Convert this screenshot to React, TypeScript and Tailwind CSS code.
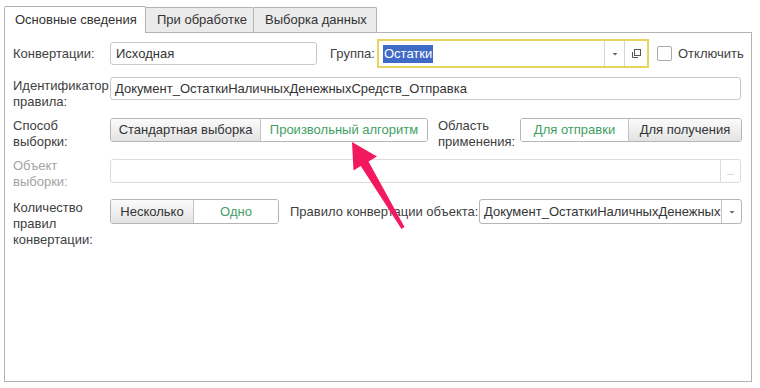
import React from "react";

const Seg = ({ children, active, className = "" }: { children: React.ReactNode; active?: boolean; className?: string }) => (
  <div
    className={
      "flex items-center justify-center h-full " +
      (active ? "bg-white text-[#3f9e63] " : "bg-gradient-to-b from-[#fbfbfb] to-[#e3e3e3] text-[#333] ") +
      className
    }
  >
    {children}
  </div>
);

const Arrow = () => (
  <svg width="10" height="10" viewBox="0 0 10 10" className="block">
    <path d="M2.5 4 L7.5 4 L5 6.5 Z" fill="#666" />
  </svg>
);

export default function App() {
  return (
    <div className="w-[760px] h-[388px] bg-white relative overflow-hidden font-['Liberation_Sans',Arial,sans-serif] text-[13px] text-[#404040]">
      {/* tabs */}
      <div className="flex items-end pl-[4px] pt-[6px] h-[33px]">
        <div className="relative z-10 h-[27px] w-[142px] border border-b-0 border-[#b3b3b3] bg-white flex items-center pl-[10px] text-[#333] rounded-tl-[2px] rounded-tr-[2px]">
          Основные сведения
        </div>
        <div className="h-[25px] mb-[1px] w-[108px] border border-l-0 border-b-0 border-[#b3b3b3] bg-[#ebebeb] flex items-center pl-[11px] text-[#333] rounded-tr-[2px]">
          При обработке
        </div>
        <div className="h-[25px] mb-[1px] w-[123px] border border-l-0 border-b-0 border-[#b3b3b3] bg-[#ebebeb] flex items-center pl-[11px] text-[#333] rounded-tr-[2px]">
          Выборка данных
        </div>
      </div>

      {/* panel */}
      <div className="-mt-px ml-[4px] w-[748px] h-[350px] border border-[#b3b3b3] bg-white pl-[8px] pt-[6px]">
        {/* row 1 */}
        <div className="flex items-center h-[29px]">
          <div className="w-[97px] leading-[16px]">Конвертации:</div>
          <div className="w-[207px] h-[23px] border border-[#c9c9c9] rounded-[3px] flex items-center pl-[5px] text-[#333]">
            Исходная
          </div>
          <div className="ml-[13px] w-[47px]">Группа:</div>
          <div className="w-[272px] h-[29px] border-2 border-[#e6d55e] bg-white flex items-stretch">
            <div className="flex-1 flex items-center pl-[4px]">
              <span className="bg-[#3f6ac6] text-white leading-[18px] px-[1px]">Остатки</span>
            </div>
            <div className="w-[20px] border-l border-[#d6d6d6] flex items-center justify-center">
              <Arrow />
            </div>
            <div className="w-[23px] border-l border-[#d6d6d6] flex items-center justify-center">
              <svg width="11" height="11" viewBox="0 0 11 11" className="block">
                <rect x="3.5" y="1.5" width="6" height="6" fill="none" stroke="#555" />
                <path d="M1.5 4 V9.5 H7" fill="none" stroke="#555" />
              </svg>
            </div>
          </div>
          <div className="ml-[8px] w-[15px] h-[15px] border border-[#a9a9a9] rounded-[2px] bg-white" />
          <div className="ml-[6px] text-[#404040]">Отключить</div>
        </div>

        {/* row 2 */}
        <div className="flex items-start mt-[9px]">
          <div className="w-[97px] leading-[16px] pt-[1px]">
            Идентификатор
            <br />
            правила:
          </div>
          <div className="w-[631px] h-[23px] border border-[#c9c9c9] rounded-[3px] flex items-center pl-[4px] text-[#333]">
            Документ_ОстаткиНаличныхДенежныхСредств_Отправка
          </div>
        </div>

        {/* row 3 */}
        <div className="flex items-start mt-[7px]">
          <div className="w-[97px] leading-[16px] pt-[1px]">
            Способ
            <br />
            выборки:
          </div>
          <div className="mt-[1px] w-[318px] h-[24px] border border-[#b5b5b5] rounded-[3px] overflow-hidden flex">
            <Seg className="w-[150px] border-r border-[#c4c4c4]">Стандартная выборка</Seg>
            <Seg active className="flex-1">Произвольный алгоритм</Seg>
          </div>
          <div className="ml-[10px] w-[82px] leading-[16px] pt-[1px]">
            Область
            <br />
            применения:
          </div>
          <div className="mt-[1px] w-[222px] h-[24px] border border-[#b5b5b5] rounded-[3px] overflow-hidden flex">
            <Seg active className="w-[108px] border-r border-[#c4c4c4]">Для отправки</Seg>
            <Seg className="flex-1">Для получения</Seg>
          </div>
        </div>

        {/* row 4 */}
        <div className="flex items-start mt-[7px]">
          <div className="w-[97px] leading-[16px] pt-[1px] text-[#a3a3a3]">
            Объект
            <br />
            выборки:
          </div>
          <div className="mt-[2px] w-[631px] h-[24px] border border-[#dcdcdc] rounded-[3px] flex">
            <div className="flex-1" />
            <div className="w-[20px] border-l border-[#dcdcdc] flex items-center justify-center text-[#9a9a9a] text-[9px] leading-none pt-[3px]">
              ...
            </div>
          </div>
        </div>

        {/* row 5 */}
        <div className="flex items-start mt-[8px]">
          <div className="w-[97px] leading-[16px] pt-[2px]">
            Количество
            <br />
            правил
            <br />
            конвертации:
          </div>
          <div className="mt-[1px] w-[169px] h-[25px] border border-[#b5b5b5] rounded-[3px] overflow-hidden flex">
            <Seg className="w-[83px] border-r border-[#c4c4c4]">Несколько</Seg>
            <Seg active className="flex-1">Одно</Seg>
          </div>
          <div className="ml-[11px] w-[189px] h-[25px] mt-[1px] flex items-center">Правило конвертации объекта:</div>
          <div className="mt-[1px] w-[263px] h-[25px] border border-[#b5b5b5] rounded-[3px] flex bg-white">
            <div className="flex-1 overflow-hidden whitespace-nowrap flex items-center pl-[4px] text-[#333]">
              Документ_ОстаткиНаличныхДенежныхСредств
            </div>
            <div className="w-[20px] border-l border-[#c4c4c4] flex items-center justify-center">
              <Arrow />
            </div>
          </div>
        </div>
      </div>

      {/* annotation arrow */}
      <svg className="absolute left-0 top-0 pointer-events-none" width="760" height="388" viewBox="0 0 760 388">
        <polygon
          points="352,142 377,156.5 368.5,161.5 404.5,227 401.5,229 360.8,166 353.5,170.5"
          fill="#f3195f"
        />
      </svg>
    </div>
  );
}
